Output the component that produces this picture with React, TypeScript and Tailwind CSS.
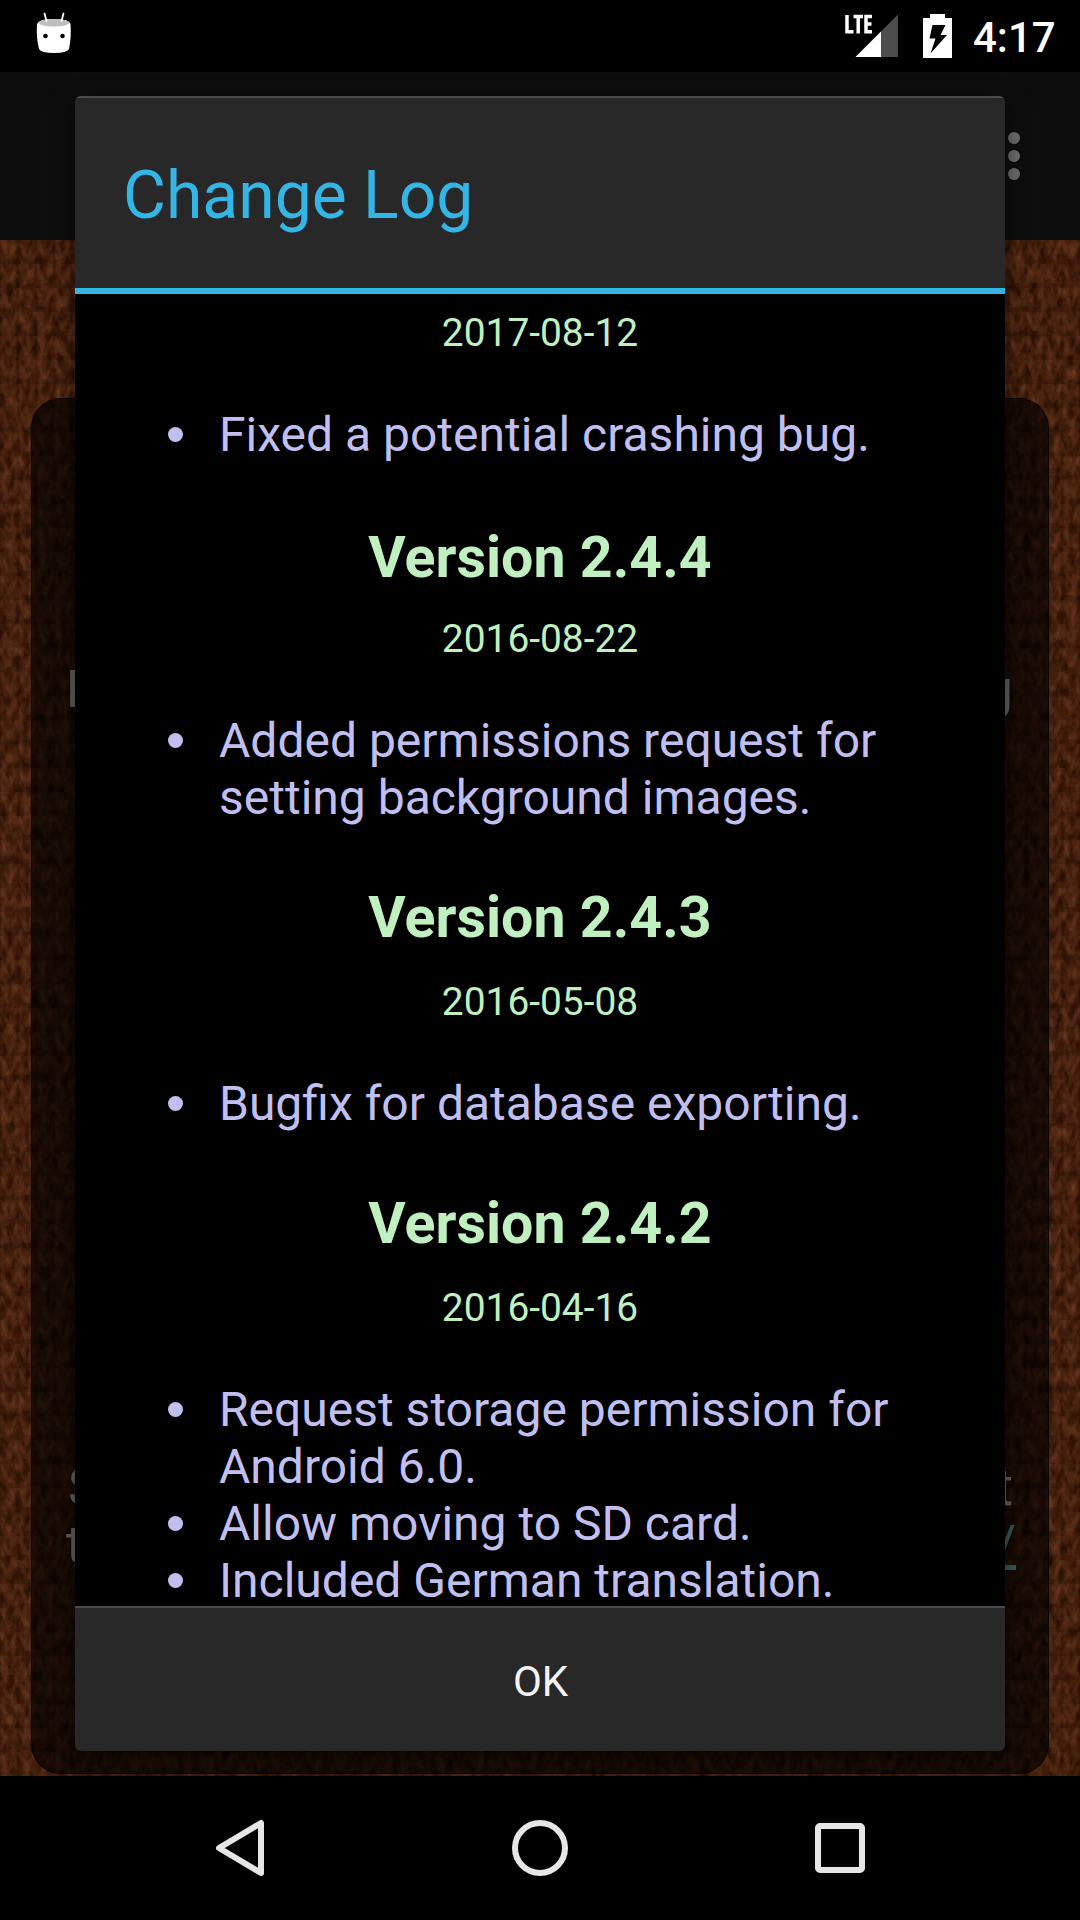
import type { ReactNode } from "react";

function StatusBar() {
  return (
    <div className="flex h-[72px] w-full items-start bg-black pr-[25px] pl-[36px] text-white">
      <svg className="mt-[12px] h-[42px] w-[36px]" viewBox="0 0 36 42">
        <path d="M1 12Q3 7 18 7Q33 7 34.500 12Q35.500 25 33 37Q31 41 18 41Q5 41 3 37Q0 25 1 12Z" fill="#fff" />
        <ellipse cx="18" cy="10.800" rx="15" ry="3.800" fill="#bdbdbd" />
        <path d="M8.500 1.500L10.500 9M27.500 1.500L25.500 9" stroke="#fff" strokeWidth="1.800" strokeLinecap="round" />
        <circle cx="9.500" cy="24" r="2.300" fill="#000" />
        <circle cx="26.500" cy="24" r="2.300" fill="#000" />
      </svg>
      <svg className="mt-[13px] ml-auto h-[46px] w-[54px]" viewBox="0 0 54 46">
        <path d="M53 1.500V44H10.500Z" fill="#4d4d4d" />
        <path d="M36 18.500V44H10.500Z" fill="#fff" />
        <path d="M2 2V18.800H8.500M8.500 3.600H18M13.200 3.600V20.500M27 3.600H21V18.800H27M21 11H26.500" fill="none" stroke="#fff" strokeWidth="3.500" />
      </svg>
      <svg className="mt-[14px] ml-[24px] h-[44px] w-[29px]" viewBox="0 0 29 44">
        <path d="M0 4H7V0H22V4H29V44H0Z" fill="#fff" />
        <path d="M9.500 11H22.500L17.500 21H24L7.500 39.500L12.500 24.500H6.500Z" fill="#000" />
      </svg>
      <div className="ml-[21px] w-[82px] text-[42px] leading-[76px] font-medium whitespace-nowrap">4:17</div>
    </div>
  );
}

function KnitBackdrop() {
  return (
    <svg className="absolute inset-0 h-full w-full" aria-hidden="true">
      <defs>
        <filter id="wool" x="0" y="0" width="100%" height="100%" colorInterpolationFilters="sRGB">
          <feTurbulence type="fractalNoise" baseFrequency="0.13 0.07" numOctaves="4" seed="8" />
          <feColorMatrix values="0.32 0 0 0 0.1  0.2 0 0 0 0.018  0.15 0 0 0 -0.03  0 0 0 0 1" />
        </filter>
        <pattern id="knit" width="18" height="24" patternUnits="userSpaceOnUse">
          <path d="M1 2Q5 8 8 17M17 2Q13 8 10 17" stroke="#a0603c" strokeOpacity="0.11" strokeWidth="4" strokeLinecap="round" fill="none" />
          <path d="M0 0V24M18 0V24" stroke="#000" strokeOpacity="0.1" strokeWidth="3" />
          <path d="M0 22H18" stroke="#000" strokeOpacity="0.06" strokeWidth="4" />
        </pattern>
      </defs>
      <rect width="100%" height="100%" filter="url(#wool)" />
      <rect width="100%" height="100%" fill="url(#knit)" />
    </svg>
  );
}

function Version({ children }: { children: ReactNode }) {
  return <h2 className="h-[66px] text-center text-[57.3px] leading-[68px] font-bold text-[#c1f0c0]">{children}</h2>;
}

function ReleaseDate({ children }: { children: ReactNode }) {
  return <p className="h-[46px] text-center text-[38.9px] leading-[46px] text-[#c1f0c0]">{children}</p>;
}

function Item({ children }: { children: ReactNode }) {
  return (
    <li className="flex text-[48px] leading-[57px] whitespace-nowrap text-[#c1bff0]">
      <span className="mt-[21px] mr-[36px] ml-[93px] h-[15px] w-[15px] shrink-0 rounded-full bg-[#c1bff0]" />
      <span>{children}</span>
    </li>
  );
}

function ChangeLogDialog() {
  return (
    <section className="absolute top-[96px] left-[75px] flex h-[1655px] w-[930px] flex-col overflow-hidden rounded-[6px] bg-[#282828] shadow-[0_8px_24px_rgba(0,0,0,0.5)]">
      <header className="h-[192px] border-t-2 border-[#4a4a4a] pl-[48px] text-[66px] leading-[195px] text-[#33b5e5]">Change Log</header>
      <div className="h-[6px] bg-[#33b5e5]" />
      <div className="h-[1312px] overflow-hidden bg-black pt-[16px]">
        <ReleaseDate>2017-08-12</ReleaseDate>
        <ul className="mt-[50px]"><Item>Fixed a potential crashing bug.</Item></ul>
        <div className="mt-[61px]"><Version>Version 2.4.4</Version></div>
        <div className="mt-[26px]"><ReleaseDate>2016-08-22</ReleaseDate></div>
        <ul className="mt-[50px]"><Item>Added permissions request for<br />setting background images.</Item></ul>
        <div className="mt-[58px]"><Version>Version 2.4.3</Version></div>
        <div className="mt-[29px]"><ReleaseDate>2016-05-08</ReleaseDate></div>
        <ul className="mt-[50px]"><Item>Bugfix for database exporting.</Item></ul>
        <div className="mt-[58px]"><Version>Version 2.4.2</Version></div>
        <div className="mt-[29px]"><ReleaseDate>2016-04-16</ReleaseDate></div>
        <ul className="mt-[50px]">
          <Item>Request storage permission for<br />Android 6.0.</Item>
          <Item>Allow moving to SD card.</Item>
          <Item>Included German translation.</Item>
        </ul>
      </div>
      <button className="h-[145px] border-t-2 border-[#4a4a4a] pt-px pl-px text-[42px] leading-[146px] text-[#f3f3f3]">OK</button>
    </section>
  );
}

function NavigationBar() {
  return (
    <nav className="flex h-[144px] items-center bg-black pl-[204px]">
      <svg className="h-[70px] w-[72px]" viewBox="0 0 72 70" fill="none" stroke="#e6e6e6" strokeWidth="6" strokeLinejoin="round">
        <path d="M57 10V60L15 35Z" />
      </svg>
      <svg className="ml-[228px] h-[70px] w-[72px]" viewBox="0 0 72 70" fill="none" stroke="#e6e6e6" strokeWidth="6">
        <circle cx="36" cy="35" r="25" />
      </svg>
      <svg className="ml-[228px] h-[70px] w-[72px]" viewBox="0 0 72 70" fill="none" stroke="#e6e6e6" strokeWidth="6">
        <rect x="14" y="13" width="44" height="44" rx="2" />
      </svg>
    </nav>
  );
}

export default function App() {
  return (
    <div className="relative flex h-[1920px] w-[1080px] flex-col overflow-hidden bg-black font-[Roboto,sans-serif]">
      <StatusBar />
      <div className="flex h-[168px] justify-end bg-[#0d0d0d] pt-[60px] pr-[60px]">
        <div className="flex flex-col gap-[6px]">
          <i className="h-3 w-3 rounded-full bg-[#6c6c6c]" />
          <i className="h-3 w-3 rounded-full bg-[#6c6c6c]" />
          <i className="h-3 w-3 rounded-full bg-[#6c6c6c]" />
        </div>
      </div>
      <main className="relative h-[1536px] overflow-hidden px-[31px] pt-[158px]">
        <KnitBackdrop />
        <div className="relative h-[1376px] rounded-[30px] border border-black/60 bg-black/65 text-[51px] leading-[57px] text-[#606060]">
          <div className="flex justify-between pt-[262px] pr-[35px] pl-[34px]"><span>H</span><span>g</span></div>
          <div className="mt-[741px] flex justify-between pr-[35px] pl-[36px]"><span>S</span><span>t</span></div>
          <div className="flex justify-between pr-[32px] pl-[34px]"><span>t</span><span className="text-[#335a58] underline">/</span></div>
        </div>
      </main>
      <NavigationBar />
      <ChangeLogDialog />
    </div>
  );
}
